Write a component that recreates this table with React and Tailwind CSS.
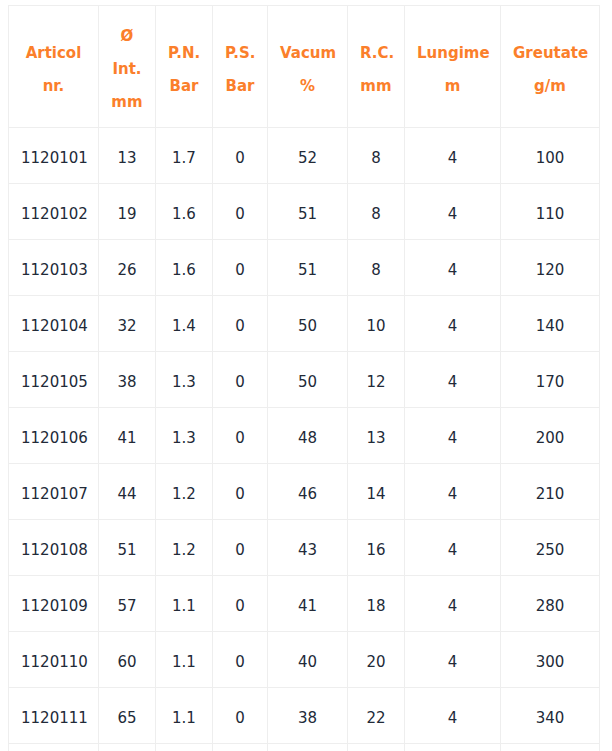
const cols = [
  { w: "w-[90px]", head: ["Articol", "nr."] },
  { w: "w-[57px]", head: ["Ø", "Int.", "mm"] },
  { w: "w-[57px]", head: ["P.N.", "Bar"] },
  { w: "w-[55px]", head: ["P.S.", "Bar"] },
  { w: "w-[80px]", head: ["Vacum", "%"] },
  { w: "w-[57px]", head: ["R.C.", "mm"] },
  { w: "w-[96px]", head: ["Lungime", "m"] },
  { w: "w-[99px]", head: ["Greutate", "g/m"] },
];

const rows = [
  ["1120101", "13", "1.7", "0", "52", "8", "4", "100"],
  ["1120102", "19", "1.6", "0", "51", "8", "4", "110"],
  ["1120103", "26", "1.6", "0", "51", "8", "4", "120"],
  ["1120104", "32", "1.4", "0", "50", "10", "4", "140"],
  ["1120105", "38", "1.3", "0", "50", "12", "4", "170"],
  ["1120106", "41", "1.3", "0", "48", "13", "4", "200"],
  ["1120107", "44", "1.2", "0", "46", "14", "4", "210"],
  ["1120108", "51", "1.2", "0", "43", "16", "4", "250"],
  ["1120109", "57", "1.1", "0", "41", "18", "4", "280"],
  ["1120110", "60", "1.1", "0", "40", "20", "4", "300"],
  ["1120111", "65", "1.1", "0", "38", "22", "4", "340"],
  // randul urmator, taiat de marginea ecranului
  ["\u00a0", "\u00a0", "\u00a0", "\u00a0", "\u00a0", "\u00a0", "\u00a0", "\u00a0"],
];

export default function App() {
  return (
    <div className="bg-white h-[751px] overflow-hidden pt-[5px] pl-[8px] font-['DejaVu_Sans',sans-serif] text-[15px] leading-[33px]">
      {/* tabel cu specificatii */}
      <table className="table-fixed border-collapse w-[592px]">
        <thead>
          <tr>
            {cols.map((c, i) => (
              <th
                key={i}
                className={`${c.w} border border-[#eeeeee] px-[12px] pt-[14px] pb-[8px] text-center align-middle font-bold text-[#fb7f2b]`}
              >
                {c.head.map((h, j) => (
                  <div key={j}>{h}</div>
                ))}
              </th>
            ))}
          </tr>
        </thead>
        <tbody>
          {rows.map((r, i) => (
            <tr key={i}>
              {r.map((v, j) => (
                <td
                  key={j}
                  className="border border-[#eeeeee] px-[12px] pt-[14px] pb-[8px] text-center text-[#222a38]"
                >
                  {v}
                </td>
              ))}
            </tr>
          ))}
        </tbody>
      </table>
    </div>
  );
}
